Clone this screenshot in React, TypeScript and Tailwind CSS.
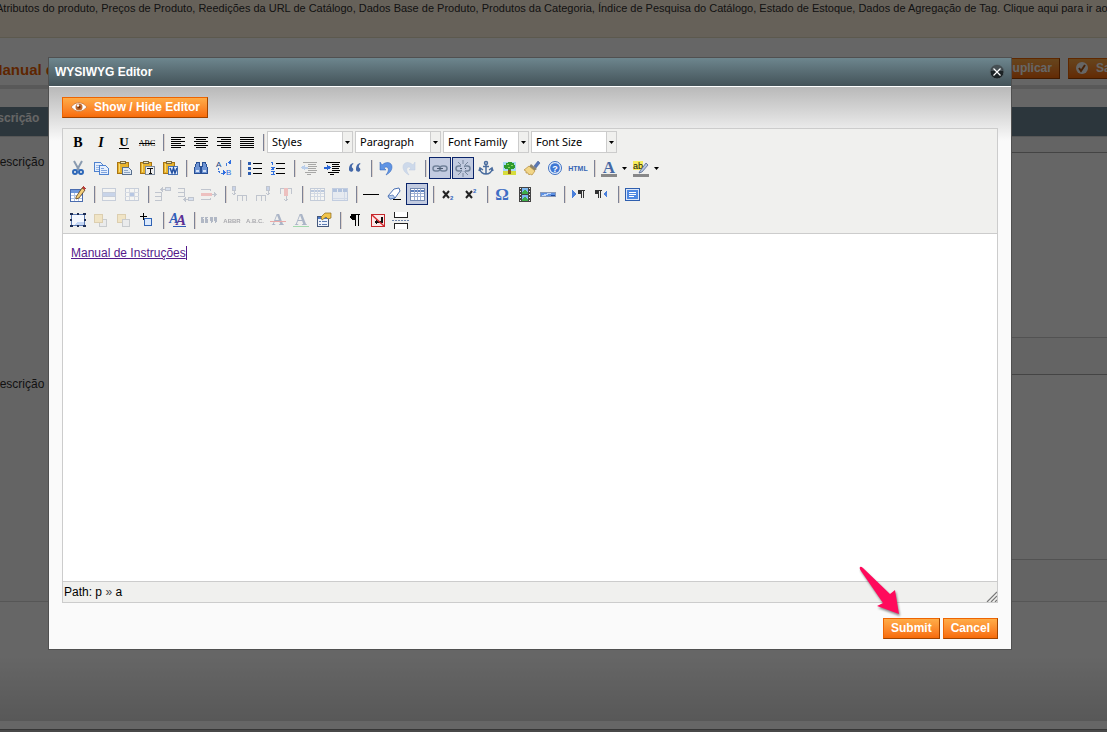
import { Fragment, useState, type ReactNode } from "react";

type Tool = {
  label: string;
  icon: ReactNode;
  disabled?: boolean;
  active?: boolean;
  split?: boolean;
};

const SERIF = "Liberation Serif, serif";
const SANS = "Liberation Sans, sans-serif";

const SELECTS = ["Styles", "Paragraph", "Font Family", "Font Size"];

function Lines({ rows }: { rows: [number, number][] }) {
  return (
    <g fill="#000">
      {rows.map(([x, w], i) => (
        <rect key={i} x={x} y={5 + i * 2} width={w} height="1" />
      ))}
    </g>
  );
}

function Letter({ children, size = 14, x = 10, y = 15, ...rest }: any) {
  return (
    <text x={x} y={y} fontSize={size} fontFamily={SERIF} fontWeight="bold" textAnchor="middle" {...rest}>
      {children}
    </text>
  );
}

const clipboard = (
  <g>
    <rect x="3.5" y="4.5" width="11" height="11" fill="#e8b32c" stroke="#a87414" />
    <path d="M5 6v8" stroke="#f8dc7c" />
    <rect x="6" y="3" width="6" height="3" fill="#7d6a3c" />
    <rect x="7" y="4" width="4" height="1" fill="#efe6b8" />
  </g>
);

const grid = (
  <g>
    <rect x="3.5" y="4.5" width="14" height="12" fill="#fff" stroke="#7288b0" />
    <path d="M4 6.5h13" stroke="#5b7fbe" strokeWidth="2" />
    <path d="M4 9.500h13M4 12.500h13M7.500 5v11M10.500 5v11M13.500 5v11" stroke="#9db0d4" />
  </g>
);

const link = (
  <g fill="none" stroke="#72839a" strokeWidth="1.500" shapeRendering="auto">
    <rect x="3" y="8" width="7" height="5" rx="2.500" />
    <rect x="10" y="8" width="7" height="5" rx="2.500" />
    <path d="M7 10.500h6" stroke="#4c5c73" strokeWidth="1" />
  </g>
);

const icons = {
  alignLeft: <Lines rows={[[3, 14], [3, 10], [3, 14], [3, 10], [3, 14], [3, 10]]} />,
  alignCenter: <Lines rows={[[3, 14], [5, 10], [3, 14], [5, 10], [3, 14], [5, 10]]} />,
  alignRight: <Lines rows={[[3, 14], [7, 10], [3, 14], [7, 10], [3, 14], [7, 10]]} />,
  alignFull: <Lines rows={[[3, 14], [3, 14], [3, 14], [3, 14], [3, 14], [3, 14]]} />,
  cut: (
    <g fill="none" shapeRendering="auto">
      <path d="M6 3l5 9M14 3l-5 9" stroke="#8a9bb0" strokeWidth="2" />
      <circle cx="7" cy="14" r="2" stroke="#2e68b8" strokeWidth="2" />
      <circle cx="13" cy="14" r="2" stroke="#2e68b8" strokeWidth="2" />
    </g>
  ),
  copy: (
    <g stroke="#4f82cf" fill="#e6effc">
      <path d="M3.5 4.5h6l3 3v6h-9z" />
      <path d="M5 7h4M5 9h5M5 11h5" stroke="#9ab8e6" />
      <path d="M8.500 7.500h6l3 3v6h-9z" />
      <path d="M10 10.500h3M10 12.500h6M10 14.500h6" stroke="#7fa3de" />
    </g>
  ),
  paste: (
    <g>
      {clipboard}
      <path d="M8.500 9.500h6l3 3v4h-9z" fill="#dfe9f5" stroke="#59708e" />
      <path d="M10 12.500h4M10 14.500h6" stroke="#8fa6c4" />
    </g>
  ),
  pasteText: (
    <g>
      {clipboard}
      <rect x="8.500" y="8.500" width="9" height="8" fill="#eee" stroke="#7d8b9d" />
      <path d="M10 10.500h6M13 10v6M11.500 15.500h3" stroke="#111" />
    </g>
  ),
  pasteWord: (
    <g>
      {clipboard}
      <rect x="8.500" y="8.500" width="9" height="8" fill="#e4edfb" stroke="#4a74b4" />
      <path d="M10 10l2 5 1.500-5 1.500 5 2-5" fill="none" stroke="#2350a0" strokeWidth="1.500" shapeRendering="auto" />
    </g>
  ),
  search: (
    <g fill="#6d94d4" stroke="#284f94">
      <path d="M5.500 4.500h3v4l1 1v6h-6v-5z" />
      <path d="M11.500 4.500h3l2 6v5h-6v-6l1-1z" />
      <path d="M5 12.500h3M12 12.500h3" stroke="#d4e2f8" strokeWidth="2" />
      <path d="M9 8.500h2" />
    </g>
  ),
  replace: (
    <g>
      <text x="2" y="9" fontSize="8" fontFamily={SANS} fill="#16407e">A</text>
      <text x="12" y="17" fontSize="8" fontFamily={SANS} fill="#2f6fe0">B</text>
      <path d="M4.500 10v3l2 2h3" fill="none" stroke="#3f77dc" strokeDasharray="2 1" />
      <path d="M9 12l3 3-3 2zM13 5l4-3v4z" fill="#2f6fe0" />
      <path d="M12.500 8V5" stroke="#3f77dc" />
    </g>
  ),
  bullist: (
    <g>
      <path d="M3 4h3v3H3zM3 9h3v3H3zM3 14h3v3H3z" fill="#2c5cb0" />
      <path d="M8 5.500h9M8 10.500h9M8 15.500h9" stroke="#000" />
    </g>
  ),
  numlist: (
    <g>
      <path d="M3 4.500h1.500V7M3 9.500h3l-2 2h2M3 13.500h3l-1 1.500 1 1.500H3" stroke="#2f6fe0" fill="none" />
      <path d="M8 5.500h9M8 10.500h9M8 15.500h9" stroke="#000" />
    </g>
  ),
  outdent: (
    <g>
      <path d="M4 4.500h14M9 6.500h8M9 8.500h9M9 10.500h8M9 12.500h9M6 14.500h11M8 16.500h4" stroke="#222" />
      <path d="M2 9.500l4-3v2h3v2H6v2z" fill="#5b93e6" />
    </g>
  ),
  indent: (
    <g>
      <path d="M4 4.500h14M10 6.500h7M10 8.500h8M10 10.500h7M10 12.500h8M6 14.500h11M8 16.500h4" stroke="#000" />
      <path d="M9 9.500l-4-3v2H2v2h3v2z" fill="#2a66d4" />
    </g>
  ),
  quote: (
    <g fill="#4468a8" shapeRendering="auto">
      <path d="M8 5C5 6 4 8 4 12a2.200 2.200 0 1 0 3-2.500C6.500 8 7 6.500 8.500 6z" />
      <path d="M15 5c-3 1-4 3-4 7a2.200 2.200 0 1 0 3-2.500c-.5-1.500 0-3 1.500-3.500z" />
    </g>
  ),
  undo: (
    <path
      d="M4 4l2 3c4-4 10-3 10 2 0 3-2 6-6 8 2-3 3-5 2-7-1-1.500-3-1-4 0l2 2H4z"
      fill="#5f94e4"
      stroke="#2f60b6"
      strokeWidth=".5"
      shapeRendering="auto"
    />
  ),
  redo: (
    <path
      d="M16 4l-2 3C10 3 4 4 4 9c0 3 2 6 6 8-2-3-3-5-2-7 1-1.500 3-1 4 0l-2 2h6z"
      fill="#8fb0e4"
      stroke="#5f86c8"
      strokeWidth=".5"
      shapeRendering="auto"
    />
  ),
  link,
  unlink: (
    <g>
      {link}
      <path d="M9 7l2 6" stroke="#c2cbe0" strokeWidth="3" />
      <path d="M5 4l3 3M10 2v4M15 4l-3 3M5 17l3-3M10 19v-4M15 17l-3-3" stroke="#64758c" strokeWidth=".8" shapeRendering="auto" />
    </g>
  ),
  anchor: (
    <g fill="none" stroke="#4a6c9e" strokeWidth="1.500" shapeRendering="auto">
      <circle cx="10" cy="5" r="1.500" />
      <path d="M10 7v9M7 8.500h6M4 11c0 3 3 5 6 5s6-2 6-5M3 13l1-3 3 2M17 13l-1-3-3 2" />
    </g>
  ),
  image: (
    <g>
      <rect x="4" y="4" width="13" height="13" fill="#a8d8f4" />
      <rect x="4" y="13" width="13" height="4" fill="#d6dc3c" />
      <path d="M9 11h3v5H9z" fill="#8a5a1c" />
      <path d="M7 5h2V4h4v1h2v2h1v3h-1v1h-3v1H9v-1H6v-1H5V7h2z" fill="#2f9a2c" />
      <path d="M8 6h2v1H8zM12 7h2v1h-2zM9 9h2v1H9z" fill="#8ad65c" />
    </g>
  ),
  cleanup: (
    <g shapeRendering="auto">
      <path d="M12 8l4-5 2 2-4 5z" fill="#5878b8" stroke="#34508c" strokeWidth=".5" />
      <path d="M9 6l6 5-3 2-5-4z" fill="#8c8470" />
      <path d="M7 8l6 5-3 4-2-1-1 1-1-2-2 0 0-2-2-1z" fill="#f2d687" stroke="#b48c3c" strokeWidth=".7" />
    </g>
  ),
  help: (
    <g shapeRendering="auto">
      <circle cx="10" cy="10" r="6.500" fill="#e9f1fc" stroke="#3d6fc2" />
      <circle cx="10" cy="10" r="4.800" fill="#3f78d4" />
      <text x="10" y="13.500" fontSize="9" fontWeight="bold" fontFamily={SANS} fill="#fff" textAnchor="middle">?</text>
    </g>
  ),
  html: <text x="10" y="13" fontSize="7" fontWeight="bold" fontFamily={SANS} fill="#3564b4" textAnchor="middle">HTML</text>,
  forecolor: (
    <g>
      <Letter size={17} y={15} fill="#4568a4">A</Letter>
      <rect x="2" y="16" width="16" height="3" fill="#888" />
    </g>
  ),
  backcolor: (
    <g>
      <rect x="2" y="3" width="10" height="9" fill="#f6ee5c" />
      <text x="2" y="11" fontSize="9" fontFamily={SANS} fill="#111">ab</text>
      <path d="M9 13l6-8 2 2-6 7-3 1z" fill="#b8c6e0" stroke="#455a84" strokeWidth=".7" shapeRendering="auto" />
      <rect x="2" y="16" width="16" height="3" fill="#888" />
    </g>
  ),
  table: (
    <g>
      <rect x="2.500" y="5.500" width="12" height="12" fill="#fff" stroke="#4a6cae" />
      <path d="M3 7.500h11" stroke="#6f98dc" strokeWidth="3" />
      <path d="M3 11.500h11M3 14.500h11M6.500 9v8M10.500 9v8" stroke="#b4c6e6" />
      <path d="M8 13l6-9 3 2-6 8-3 1z" fill="#f4cf7a" stroke="#5a3c18" strokeWidth=".8" shapeRendering="auto" />
      <path d="M14 4l1-2 3 2-1 2z" fill="#b5403c" />
    </g>
  ),
  rowProps: (
    <g>
      <rect x="3.500" y="4.500" width="13" height="12" fill="#fff" stroke="#7c90b6" />
      <path d="M3 8.500h14M3 12.500h14" stroke="#7c90b6" />
      <rect x="4" y="9" width="12" height="3" fill="#7fa3e0" />
    </g>
  ),
  cellProps: (
    <g>
      <rect x="3.500" y="4.500" width="13" height="12" fill="#fff" stroke="#7c90b6" />
      <path d="M3 8.500h14M3 12.500h14M7.500 5v11M12.500 5v11" stroke="#a4b4d0" />
      <rect x="8" y="9" width="4" height="3" fill="#4f7cd0" />
    </g>
  ),
  rowBefore: (
    <g fill="none" stroke="#6a7894">
      <path d="M2 8.500h6M2 12.500h6M2 16.500h6M8.500 8v9" />
      <rect x="12.500" y="3.500" width="5" height="3" fill="#a9c3f0" />
      <path d="M8 5.500h4M10 3.500L8 5.500l2 2" />
    </g>
  ),
  rowAfter: (
    <g fill="none" stroke="#6a7894">
      <path d="M2 4.500h6M2 8.500h6M2 12.500h6M8.500 4v9" />
      <rect x="12.500" y="13.500" width="5" height="3" fill="#a9c3f0" />
      <path d="M8 15.500h4M10 13.500l-2 2 2 2" />
    </g>
  ),
  deleteRow: (
    <g fill="none" stroke="#6a7894">
      <path d="M2 5.500h9M2 15.500h9M11.500 5v2M11.500 14v2" />
      <rect x="2" y="9" width="11" height="3" fill="#e86a6a" stroke="none" />
      <path d="M13 10.500h4M15 8.500l2 2-2 2" />
    </g>
  ),
  colBefore: (
    <g fill="none" stroke="#6a7894">
      <path d="M7.500 17v-5.500h9V17M12.500 12v5" />
      <rect x="2.500" y="2.500" width="3" height="4" fill="#7f9fe0" />
      <path d="M4 7v4M2 9l2 2 2-2" />
    </g>
  ),
  colAfter: (
    <g fill="none" stroke="#6a7894">
      <path d="M3.500 17v-5.500h9V17M8.500 12v5" />
      <rect x="13.500" y="2.500" width="3" height="4" fill="#7f9fe0" />
      <path d="M15 7v4M13 9l2 2 2-2" />
    </g>
  ),
  deleteCol: (
    <g fill="none" stroke="#6a7894">
      <path d="M4.500 10V4.500h11V10" />
      <rect x="8" y="4" width="4" height="8" fill="#e86a6a" stroke="none" />
      <path d="M10 12v5M8 15l2 2 2-2" />
    </g>
  ),
  splitCells: grid,
  mergeCells: (
    <g>
      <rect x="2.500" y="4.500" width="15" height="12" fill="#d4e0f6" stroke="#6f8fc9" />
      <path d="M3 6.500h14" stroke="#3f6fc0" strokeWidth="3" strokeDasharray="4 1" />
      <path d="M3 14.500h14M14.500 8v8" stroke="#9db4de" />
    </g>
  ),
  hr: <path d="M2 10.500h16" stroke="#000" />,
  eraser: (
    <g shapeRendering="auto">
      <path d="M4 12l6-7 5-1 1 3-5 7-5 1z" fill="#fff" stroke="#4b71b4" />
      <path d="M4 12l5-1 2 3-5 1z" fill="#b7cbea" stroke="#4b71b4" strokeWidth=".7" />
      <path d="M9 15.500h8" stroke="#000" />
    </g>
  ),
  sub: (
    <g>
      <path d="M5 7l6 7M11 7l-6 7" stroke="#222" strokeWidth="2" shapeRendering="auto" />
      <text x="12" y="16" fontSize="6" fontWeight="bold" fontFamily={SANS} fill="#2f62bc">2</text>
    </g>
  ),
  sup: (
    <g>
      <path d="M5 7l6 7M11 7l-6 7" stroke="#222" strokeWidth="2" shapeRendering="auto" />
      <text x="12" y="9" fontSize="6" fontWeight="bold" fontFamily={SANS} fill="#2f62bc">2</text>
    </g>
  ),
  charmap: <Letter size={17} y={16} fill="#3f6ec4">Ω</Letter>,
  media: (
    <g>
      <rect x="4" y="3" width="12" height="15" fill="#444" />
      <rect x="7" y="4" width="6" height="6" fill="#7cb8f0" />
      <rect x="7" y="11" width="6" height="6" fill="#7cb8f0" />
      <path d="M7 8l3-2 3 2v2H7zM7 15l3-2 3 2v2H7z" fill="#3dae48" />
      <path d="M5.500 4v14M14.500 4v14" stroke="#eee" strokeDasharray="1 2" />
    </g>
  ),
  advhr: (
    <g>
      <rect x="2.500" y="8.500" width="15" height="4" fill="#5f92e4" stroke="#8a9ab8" />
      <path d="M3 12l7-3h4l-7 3z" fill="#c4dafa" />
      <path d="M13 11h4v1h-4z" fill="#1d4aa0" />
    </g>
  ),
  ltr: (
    <g>
      <path d="M3 6l4 4-4 4z" fill="#4a80dc" />
      <path d="M11 6.500h5M12.500 6v8M14.500 6v8" stroke="#333" />
      <path d="M9 6h4v4H9z" fill="#333" />
    </g>
  ),
  rtl: (
    <g>
      <path d="M15 6l-4 4 4 4z" fill="#4a80dc" />
      <path d="M5 6.500h5M6.500 6v8M8.500 6v8" stroke="#333" />
      <path d="M3 6h4v4H3z" fill="#333" />
    </g>
  ),
  fullscreen: (
    <g>
      <rect x="2.500" y="4.500" width="14" height="12" fill="#dbe6f8" stroke="#2f5fae" />
      <rect x="4" y="6" width="11" height="9" fill="#4d88e2" />
      <path d="M6 8.500h7M6 10.500h7M6 12.500h5" stroke="#fff" />
    </g>
  ),
  insertLayer: (
    <g>
      <rect x="3.500" y="4.500" width="13" height="11" fill="#f4f8ff" stroke="#5d7cb4" />
      <path d="M9 12h7v3H6z" fill="#c4d6f4" />
      <path
        d="M2 3h3v2H2zM15 3h3v2h-3zM2 15h3v2H2zM15 15h3v2h-3zM9 3h2v2H9zM9 15h2v2H9zM2 9h2v2H2zM16 9h2v2h-2z"
        fill="#1c2c54"
      />
    </g>
  ),
  forward: (
    <g>
      <rect x="8.500" y="9.500" width="7" height="7" fill="#dfe3ea" stroke="#7f8794" />
      <rect x="3.500" y="4.500" width="8" height="8" fill="#f2cf7c" stroke="#b8923c" />
    </g>
  ),
  backward: (
    <g>
      <rect x="3.500" y="4.500" width="8" height="8" fill="#f2cf7c" stroke="#b8923c" />
      <rect x="8.500" y="9.500" width="7" height="7" fill="#dfe3ea" stroke="#7f8794" />
    </g>
  ),
  absolute: (
    <g>
      <path d="M3 6.500h7M6.500 3v7" stroke="#000" />
      <rect x="7.500" y="8.500" width="7" height="7" fill="#dbe9fc" stroke="#2f62b4" />
    </g>
  ),
  styleProps: (
    <g>
      <Letter size={14} x={6} y={13} fontStyle="italic" fill="#2f5cb8">A</Letter>
      <Letter size={15} x={13} y={15} fontStyle="italic" fill="#5b2f94">A</Letter>
      <path d="M5 16.500h13" stroke="#2f5cb8" />
    </g>
  ),
  cite: (
    <path
      d="M2 7h3v1H4v1h1v4H2zM6 7h3v1H8v1h1v4H6zM11 7h3v4l-1 2h-1v-2h-1zM15 7h3v4l-1 2h-1v-2h-1z"
      fill="#3f527c"
    />
  ),
  abbr: <text x="10" y="13" fontSize="6" fontWeight="bold" fontFamily={SANS} fill="#223" textAnchor="middle">ABBR</text>,
  acronym: <text x="10" y="13" fontSize="6" fontWeight="bold" fontFamily={SANS} fill="#223" textAnchor="middle">A.B.C.</text>,
  del: (
    <g>
      <Letter size={17} fill="#2c4a80">A</Letter>
      <path d="M2 11.500h16" stroke="#e02828" />
    </g>
  ),
  ins: (
    <g>
      <Letter size={17} fill="#2c4a80">A</Letter>
      <path d="M2 16.500h16" stroke="#15b03a" />
    </g>
  ),
  attribs: (
    <g>
      <rect x="3.500" y="6.500" width="11" height="10" fill="#eef3fb" stroke="#44587c" />
      <path d="M4 8h10" stroke="#4a78c8" strokeWidth="2" />
      <path d="M5 11.500h2M5 14.500h2M8 11.500h5M8 14.500h5" stroke="#5c7cb4" />
      <path d="M7 7l4-4h6v5l-3 1-2-2-4 3z" fill="#f0c44c" stroke="#8c6a1c" strokeWidth=".7" shapeRendering="auto" />
    </g>
  ),
  visualchars: (
    <g fill="#000">
      <path d="M6 4h9v1H6zM6 5h5v5H7L5 8V6zM10 5h1v11h-1zM13 5h1v11h-1z" />
    </g>
  ),
  nonbreaking: (
    <g>
      <rect x="3.500" y="4.500" width="13" height="12" fill="#fbe9e9" stroke="#c4282c" />
      <path d="M13.500 7v5H9" fill="none" stroke="#111" strokeWidth="2" />
      <path d="M9 9v6l-3-3z" fill="#111" />
      <path d="M4 5l12 11" stroke="#d42a2e" strokeWidth="1.500" shapeRendering="auto" />
    </g>
  ),
  pagebreak: (
    <g stroke="#222" fill="#fff">
      <path d="M3.500 2v5.500h13V2M3.500 19v-5.500h13V19" />
      <path d="M1 10.500h18" stroke="#7086ac" strokeDasharray="2 1" />
    </g>
  ),
};

const FORMAT: Tool[][] = [
  [
    { label: "Bold", icon: <Letter>B</Letter> },
    { label: "Italic", icon: <Letter fontStyle="italic">I</Letter> },
    {
      label: "Underline",
      icon: (
        <g>
          <Letter size={13} y={14}>U</Letter>
          <path d="M5 16.500h10" stroke="#000" />
        </g>
      ),
    },
    {
      label: "Strikethrough",
      icon: (
        <g>
          <text x="10" y="14" fontSize="8" fontFamily={SERIF} textAnchor="middle">ABC</text>
          <path d="M2 11.500h16" stroke="#000" />
        </g>
      ),
    },
  ],
  [
    { label: "Align left", icon: icons.alignLeft },
    { label: "Align center", icon: icons.alignCenter },
    { label: "Align right", icon: icons.alignRight },
    { label: "Align full", icon: icons.alignFull },
  ],
];

const ROWS: Tool[][][] = [
  [
    [
      { label: "Cut", icon: icons.cut },
      { label: "Copy", icon: icons.copy },
      { label: "Paste", icon: icons.paste },
      { label: "Paste as Plain Text", icon: icons.pasteText },
      { label: "Paste from Word", icon: icons.pasteWord },
    ],
    [
      { label: "Find", icon: icons.search },
      { label: "Find/Replace", icon: icons.replace },
    ],
    [
      { label: "Unordered list", icon: icons.bullist },
      { label: "Ordered list", icon: icons.numlist },
    ],
    [
      { label: "Outdent", icon: icons.outdent, disabled: true },
      { label: "Indent", icon: icons.indent },
      { label: "Blockquote", icon: icons.quote },
    ],
    [
      { label: "Undo", icon: icons.undo },
      { label: "Redo", icon: icons.redo, disabled: true },
    ],
    [
      { label: "Insert/edit link", icon: icons.link, active: true },
      { label: "Unlink", icon: icons.unlink, active: true },
      { label: "Anchor", icon: icons.anchor },
      { label: "Insert/edit image", icon: icons.image },
      { label: "Cleanup messy code", icon: icons.cleanup },
      { label: "Help", icon: icons.help },
      { label: "Edit HTML Source", icon: icons.html },
    ],
    [
      { label: "Text color", icon: icons.forecolor, split: true },
      { label: "Background color", icon: icons.backcolor, split: true },
    ],
  ],
  [
    [{ label: "Inserts a new table", icon: icons.table }],
    [
      { label: "Table row properties", icon: icons.rowProps, disabled: true },
      { label: "Table cell properties", icon: icons.cellProps, disabled: true },
    ],
    [
      { label: "Insert row before", icon: icons.rowBefore, disabled: true },
      { label: "Insert row after", icon: icons.rowAfter, disabled: true },
      { label: "Delete row", icon: icons.deleteRow, disabled: true },
    ],
    [
      { label: "Insert column before", icon: icons.colBefore, disabled: true },
      { label: "Insert column after", icon: icons.colAfter, disabled: true },
      { label: "Remove column", icon: icons.deleteCol, disabled: true },
    ],
    [
      { label: "Split merged table cells", icon: icons.splitCells, disabled: true },
      { label: "Merge table cells", icon: icons.mergeCells, disabled: true },
    ],
    [
      { label: "Insert horizontal ruler", icon: icons.hr },
      { label: "Remove formatting", icon: icons.eraser },
      { label: "Toggle guidelines", icon: grid, active: true },
    ],
    [
      { label: "Subscript", icon: icons.sub },
      { label: "Superscript", icon: icons.sup },
    ],
    [
      { label: "Insert custom character", icon: icons.charmap },
      { label: "Insert embedded media", icon: icons.media },
      { label: "Horizontal rule", icon: icons.advhr },
    ],
    [
      { label: "Direction left to right", icon: icons.ltr },
      { label: "Direction right to left", icon: icons.rtl },
    ],
    [{ label: "Toggle fullscreen mode", icon: icons.fullscreen }],
  ],
  [
    [
      { label: "Insert new layer", icon: icons.insertLayer },
      { label: "Move forward", icon: icons.forward, disabled: true },
      { label: "Move backward", icon: icons.backward, disabled: true },
      { label: "Toggle absolute positioning", icon: icons.absolute },
    ],
    [{ label: "Edit CSS Style", icon: icons.styleProps }],
    [
      { label: "Citation", icon: icons.cite, disabled: true },
      { label: "Abbreviation", icon: icons.abbr, disabled: true },
      { label: "Acronym", icon: icons.acronym, disabled: true },
      { label: "Deletion", icon: icons.del, disabled: true },
      { label: "Insertion", icon: icons.ins, disabled: true },
      { label: "Insert/Edit Attributes", icon: icons.attribs },
    ],
    [
      { label: "Visual control characters", icon: icons.visualchars },
      { label: "Insert non-breaking space", icon: icons.nonbreaking },
      { label: "Insert page break", icon: icons.pagebreak },
    ],
  ],
];

const orangeButton =
  "flex h-[21px] items-center border border-[#ed6502] border-r-[#a04300] border-b-[#a04300] bg-linear-to-b from-[#ffac47] to-[#f76b07] px-[7px] pb-[2px] text-xs font-bold whitespace-nowrap text-white";

function Caret() {
  return (
    <svg width="5" height="3" viewBox="0 0 5 3" aria-hidden="true">
      <path d="M0 0h5L2.500 3z" fill="#000" />
    </svg>
  );
}

function ToolButton({ tool }: { tool: Tool }) {
  return (
    <button
      aria-label={tool.label}
      disabled={tool.disabled}
      className={`flex h-[22px] shrink-0 items-center border ${tool.split ? "w-8 justify-between pr-[2px]" : "mr-px w-[22px]"} ${
        tool.active ? "border-[#0a246a] bg-[#c2cbe0]" : "border-transparent"
      }`}
    >
      <svg
        width="20"
        height="20"
        viewBox="0 0 20 20"
        shapeRendering="crispEdges"
        className={`shrink-0 ${tool.disabled ? "opacity-35" : ""}`}
      >
        {tool.icon}
      </svg>
      {tool.split && <Caret />}
    </button>
  );
}

function Separator() {
  return <span className="mr-[2px] ml-1 h-[17px] w-[2px] shrink-0 border-l border-[#7c8296] bg-[#dcd2cc]" />;
}

function ToolGroups({ groups }: { groups: Tool[][] }) {
  return (
    <>
      {groups.map((group, i) => (
        <Fragment key={i}>
          {i > 0 && <Separator />}
          {group.map((tool) => (
            <ToolButton key={tool.label} tool={tool} />
          ))}
        </Fragment>
      ))}
    </>
  );
}

function Toolbar() {
  return (
    <div className="border-b border-[#ccc] bg-[#f0f0ee] pl-1">
      <div className="flex h-[26px] items-center">
        <ToolGroups groups={FORMAT} />
        <Separator />
        {SELECTS.map((name) => (
          <div key={name} className="mr-[2px] flex h-[22px] w-[86px] items-center border border-[#ccc] bg-white">
            <select
              aria-label={name}
              className="h-5 min-w-0 flex-1 appearance-none pl-1 font-['Noto_Sans',sans-serif] text-[11px] text-black"
            >
              <option>{name}</option>
            </select>
            <span className="flex h-5 w-[10px] items-center justify-center border-l border-[#ccc] bg-[#f0f0ee]">
              <Caret />
            </span>
          </div>
        ))}
      </div>
      {ROWS.map((groups, i) => (
        <div key={i} className="flex h-[26px] items-center">
          <ToolGroups groups={groups} />
        </div>
      ))}
    </div>
  );
}

function EditorDialog() {
  const [editorVisible, setEditorVisible] = useState(true);

  return (
    <div role="dialog" aria-label="WYSIWYG Editor" className="relative w-full border border-[#505050] bg-[#fafafa]">
      <div className="flex h-[29px] items-center justify-between border-b border-white bg-linear-to-b from-[#6d868e] to-[#445359] px-[6px]">
        <h2 className="text-xs font-bold text-white">WYSIWYG Editor</h2>
        <button aria-label="Close">
          <svg width="16" height="16" viewBox="0 0 16 16">
            <circle cx="8" cy="8" r="7" fill="#1b2224" stroke="#59676c" />
            <path d="M2 7a6 6 0 0 1 12 0z" fill="#475054" />
            <path d="M4.500 4.500l7 7M11.500 4.500l-7 7" stroke="#fff" strokeWidth="1.200" />
          </svg>
        </button>
      </div>

      <div className="bg-linear-to-b from-[#b9b9b9] to-[#fafafa] bg-[length:100%_54px] bg-no-repeat px-[13px] py-[10px]">
        <button className={`${orangeButton} mb-[10px]`} onClick={() => setEditorVisible(!editorVisible)}>
          <svg width="18" height="12" viewBox="0 0 18 12" className="mr-[6px]">
            <path d="M1 6q8-9 16 0q-8 9-16 0z" fill="#fff" stroke="#b5560f" strokeWidth=".6" />
            <circle cx="9" cy="6" r="3.500" fill="#c36a2c" />
            <circle cx="9" cy="6" r="1.600" fill="#6f3510" />
            <circle cx="8" cy="4.500" r="1.200" fill="#fff" />
          </svg>
          Show / Hide Editor
        </button>

        <div className="border border-[#ccc] bg-white">
          {editorVisible && <Toolbar />}
          <div className="min-h-[347px] px-2 pt-[11px] text-xs">
            <a href="#manual" className="border-r border-[#551a8b] text-[#551a8b] underline">
              Manual de Instruções
            </a>
          </div>
          <div className="flex h-[21px] items-center justify-between border-t border-[#ccc] bg-[#f0f0ee] pl-px text-xs text-black">
            <div>
              Path: <a href="#p">p</a> <span className="text-[#444]">»</span> <a href="#a">a</a>
            </div>
            <svg width="11" height="11" viewBox="0 0 11 11" className="self-end">
              <path d="M1 11L11 1M5 11l6-6M9 11l2-2" stroke="#777" strokeWidth="1.200" />
            </svg>
          </div>
        </div>

        <div className="mt-[15px] flex justify-end gap-[3px]">
          <button className={orangeButton}>Submit</button>
          <button className={orangeButton}>Cancel</button>
        </div>
      </div>

      <svg
        width="46"
        height="54"
        viewBox="0 0 46 54"
        className="pointer-events-none absolute right-[107px] bottom-[29px] drop-shadow-[1px_2px_1px_rgba(0,0,0,0.45)]"
        aria-hidden="true"
      >
        <path d="M2 1q1-1 3 1l27 26 5-4 4 24-22-8 6-3L3 5Q1 2 2 1z" fill="#ff0a5c" />
      </svg>
    </div>
  );
}

function DescriptionRow({ id, label }: { id: string; label: string }) {
  return (
    <div className="flex pt-[15px] pb-[21px]">
      <label htmlFor={id} className="w-[190px] pt-[2px] pl-4 text-xs text-[#2f2f2f]">
        {label}
      </label>
      <textarea
        id={id}
        className="h-[186px] flex-1 resize-none border border-[#ccc] border-t-[#aaa] bg-white"
      />
    </div>
  );
}

function ProductPage() {
  return (
    <div className="-mr-10 -ml-[26px] bg-white">
      <div className="h-[38px] border-b border-[#e6dfc4] bg-[#fff3df] pl-[22px] text-[11px] leading-4 whitespace-nowrap text-[#2f2f2f]">
        Atributos do produto, Preços de Produto, Reedições da URL de Catálogo, Dados Base de Produto, Produtos da
        Categoria, Índice de Pesquisa do Catálogo, Estado de Estoque, Dados de Agregação de Tag. Clique aqui para ir ao{" "}
        <a href="#indices" className="text-[#ea7601] underline">
          Gerenciamento de Índices
        </a>
      </div>

      <div className="flex items-start justify-between border-b-4 border-[#dfdfdf] pt-5 pr-[7px] pb-[6px] pl-4">
        <h1 className="pt-[3px] text-[15px] leading-[18px] font-bold text-[#eb5e00]">Manual de Instruções</h1>
        <div className="flex gap-2">
          <button className={orangeButton}>Duplicar</button>
          <button className={orangeButton}>
            <svg width="12" height="12" viewBox="0 0 12 12" className="mr-2">
              <circle cx="6" cy="6" r="6" fill="#fff" />
              <path d="M3 6l2 3 4-6" fill="none" stroke="#b5560f" strokeWidth="2" />
            </svg>
            Salvar
          </button>
        </div>
      </div>

      <h2 className="mt-[18px] h-[29px] bg-[#6f8796] pt-px pl-2 text-xs leading-5 font-bold text-white">
        Descrição
      </h2>
      <div className="border border-[#d6d6d6] bg-[#fafafa] pb-5">
        <DescriptionRow id="description" label="Descrição" />
        <DescriptionRow id="short-description" label="Descrição" />
      </div>

      <div className="mt-[54px] h-[65px] bg-linear-to-b from-white to-[#dcdcdc]" />
      <div className="h-2 bg-white" />
      <div className="h-1 border-t border-[#888] bg-[#b4b4b4]" />
    </div>
  );
}

export default function App() {
  return (
    <div className="relative overflow-hidden font-['Liberation_Sans',Arial,sans-serif]">
      <ProductPage />
      <div className="fixed inset-0 flex items-start bg-black/60 pt-[57px] pr-[95px] pl-12">
        <EditorDialog />
      </div>
    </div>
  );
}
